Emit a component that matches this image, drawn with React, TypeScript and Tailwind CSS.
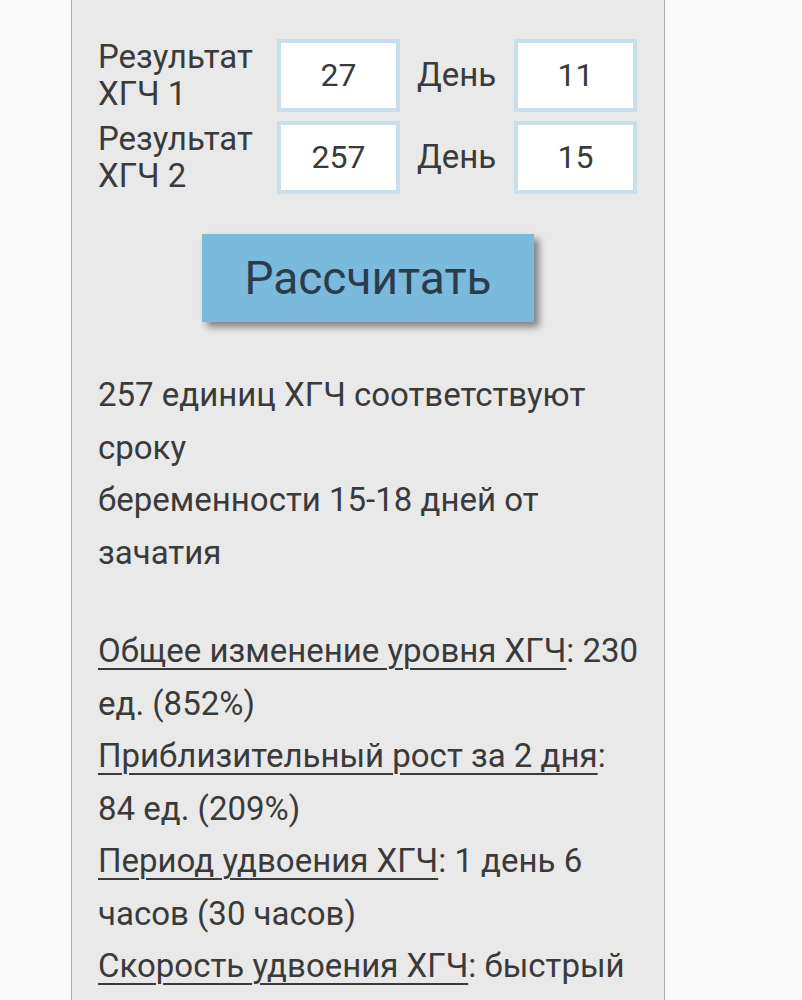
import React from 'react'

const rows = [
  { label: ['Результат', 'ХГЧ 1'], value: '27', day: '11' },
  { label: ['Результат', 'ХГЧ 2'], value: '257', day: '15' },
]

const Field = ({ value }: { value: string }) => (
  <input
    readOnly
    defaultValue={value}
    className="w-[123px] h-[73px] border-4 border-[#c8dfeb] bg-white text-center text-[32px] text-[#3a3a3a] outline-none"
    style={{ fontFamily: 'Roboto, sans-serif' }}
  />
)

const Term = ({ children }: { children: React.ReactNode }) => (
  <span className="underline decoration-2 underline-offset-[6px]">{children}</span>
)

export default function App() {
  return (
    <div className="min-h-screen bg-[#fafafa]" style={{ fontFamily: 'Roboto, "Noto Sans", sans-serif' }}>
      <div className="ml-[71px] w-[594px] min-h-[1000px] border-x border-[#ababab] bg-[#e9e9e9] pl-[26px] pr-[18px] pt-[38px] text-[#3a3a3a]">
        {/* Form */}
        <div className="flex flex-col gap-[8px]">
          {rows.map((r) => (
            <div key={r.value} className="flex items-center">
              <div className="w-[179px] text-[33px] leading-[37px]">
                {r.label[0]}
                <br />
                {r.label[1]}
              </div>
              <Field value={r.value} />
              <div className="ml-[17px] w-[97px] text-[33px]">День</div>
              <Field value={r.day} />
            </div>
          ))}
        </div>

        <button className="ml-[104px] mt-[40px] w-[332px] h-[88px] bg-[#7bb9dd] text-[46px] text-[#2b3d4d] shadow-[5px_5px_7px_rgba(0,0,0,0.45)]">
          Рассчитать
        </button>

        {/* Result */}
        <div className="mt-[47px] text-[33px] leading-[52.5px]">
          <p>
            257 единиц ХГЧ соответствуют сроку
            <br />
            беременности 15-18 дней от зачатия
          </p>
          <p className="mt-[46px]">
            <Term>Общее изменение уровня ХГЧ</Term>: 230 ед. (852%)
            <br />
            <Term>Приблизительный рост за 2 дня</Term>: 84 ед. (209%)
            <br />
            <Term>Период удвоения ХГЧ</Term>: 1 день 6 часов (30 часов)
            <br />
            <Term>Скорость удвоения ХГЧ</Term>: быстрый
          </p>
        </div>
      </div>
    </div>
  )
}
